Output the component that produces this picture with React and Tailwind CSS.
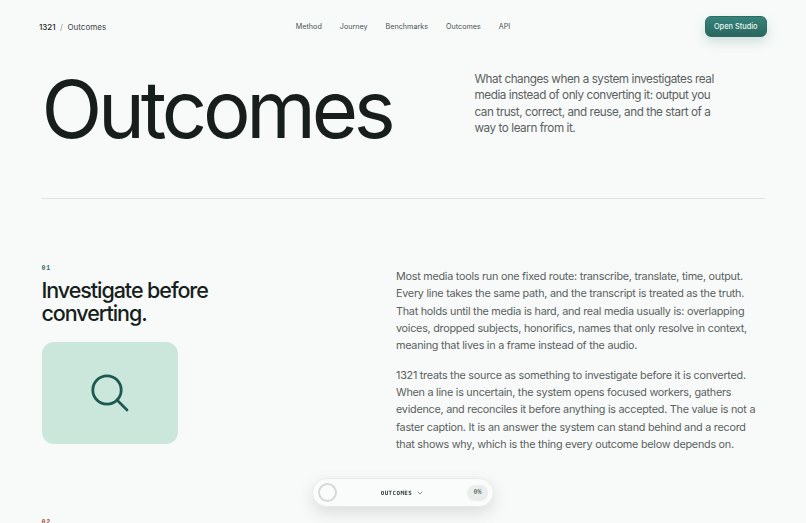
const links = ['Method', 'Journey', 'Benchmarks', 'Outcomes', 'API']

const lede = [
  'What changes when a system investigates real',
  'media instead of only converting it: output you',
  'can trust, correct, and reuse, and the start of a',
  'way to learn from it.',
]

const paragraphs = [
  [
    'Most media tools run one fixed route: transcribe, translate, time, output.',
    'Every line takes the same path, and the transcript is treated as the truth.',
    'That holds until the media is hard, and real media usually is: overlapping',
    'voices, dropped subjects, honorifics, names that only resolve in context,',
    'meaning that lives in a frame instead of the audio.',
  ],
  [
    '1321 treats the source as something to investigate before it is converted.',
    'When a line is uncertain, the system opens focused workers, gathers',
    'evidence, and reconciles it before anything is accepted. The value is not a',
    'faster caption. It is an answer the system can stand behind and a record',
    'that shows why, which is the thing every outcome below depends on.',
  ],
]

function Lines({ lines }) {
  return lines.map(line => (
    <span key={line} className="block whitespace-nowrap">{line}</span>
  ))
}

function Header() {
  return (
    <header className="flex h-[53px] items-center justify-between pl-[39px] pr-[39px]">
      <div className="flex w-[257px] gap-[4.5px] text-[8px] leading-3 text-[#3d4644]">
        <span className="font-medium text-[#1d2624]">1321</span>
        <span className="text-[#8b9391]">/</span>
        <span>Outcomes</span>
      </div>
      <nav className="flex gap-[18px] text-[7.2px] leading-3 text-[#4a5351]">
        {links.map(link => <a key={link} href="#">{link}</a>)}
      </nav>
      <div className="flex w-[257px] justify-end">
        <button className="h-[21px] w-[62.5px] rounded-[6px] border border-[#2b6d64] bg-linear-to-b from-[#37837a] to-[#2a675f] pt-px text-[7.4px] font-medium text-[#e9f5f1] shadow-[0_5px_12px_rgba(43,109,100,0.2)]">
          Open Studio
        </button>
      </div>
    </header>
  )
}

function ProgressPill() {
  return (
    <div className="fixed bottom-4 left-[312px] flex h-[29px] w-[182px] items-center justify-between rounded-full border border-[#e6eae8] bg-[#fafcfb] pl-[5px] pr-[5px] shadow-[0_6px_16px_rgba(20,32,29,0.13)]">
      <span className="size-[19px] rounded-full border-2 border-[#d5dad8]" />
      <span className="flex items-center gap-[5px] pt-px font-['DejaVu_Sans_Mono',monospace] text-[5.8px] font-bold tracking-[0.45px] text-[#303937]">
        OUTCOMES
        <svg width="6" height="4" viewBox="0 0 6 4" fill="none" stroke="#7b8482" strokeWidth="0.9">
          <path d="M0.6 0.7 3 3.1 5.4 0.7" />
        </svg>
      </span>
      <span className="flex h-4 w-[21px] items-center justify-center rounded-full bg-[#e9edec] pt-px font-['Liberation_Mono',monospace] text-[6.5px] font-bold text-[#6b7472]">
        0%
      </span>
    </div>
  )
}

export default function App() {
  return (
    <div className="h-screen overflow-hidden bg-[#f8faf9] font-[Inter,sans-serif] text-[#171e1c]">
      <Header />
      <main className="px-[41.5px]">
        <section className="flex h-[146px] border-b border-[#dfe3e2] pt-[11px]">
          <h1 className="w-[433px] text-[79.5px] leading-[90px] tracking-[-4.25px]">Outcomes</h1>
          <p className="pt-[7px] text-[11.7px] leading-[16.4px] tracking-[-0.44px] text-[#5a615f]">
            <Lines lines={lede} />
          </p>
        </section>
        <section className="flex pt-[66px]">
          <div className="w-[354.5px]">
            <p className="font-['Liberation_Mono',monospace] text-[6.5px] font-bold leading-2 tracking-[0.8px] text-[#2b6d64]">01</p>
            <h2 className="mt-[6px] text-[21.5px] font-medium leading-[22.5px] tracking-[-1.06px]">
              <Lines lines={['Investigate before', 'converting.']} />
            </h2>
            <div className="mt-[18px] flex h-[102px] w-[136.5px] items-center justify-center rounded-[12px] bg-[#cbe7db]">
              <svg width="38" height="38" viewBox="0 0 38 38" fill="none" stroke="#1d5851" strokeWidth="2.8" strokeLinecap="round">
                <circle cx="16" cy="16" r="14.2" />
                <path d="M26 26 36 36" />
              </svg>
            </div>
          </div>
          <div className="flex flex-col gap-3 pt-[3px] text-[10.8px] leading-[17.35px] tracking-[-0.25px] text-[#5a615f]">
            {paragraphs.map(lines => <p key={lines[0]}><Lines lines={lines} /></p>)}
          </div>
        </section>
        <section className="pt-[66px]">
          <p className="font-['Liberation_Mono',monospace] text-[6.5px] font-bold leading-2 tracking-[0.8px] text-[#a8503f]">02</p>
        </section>
      </main>
      <ProgressPill />
    </div>
  )
}
